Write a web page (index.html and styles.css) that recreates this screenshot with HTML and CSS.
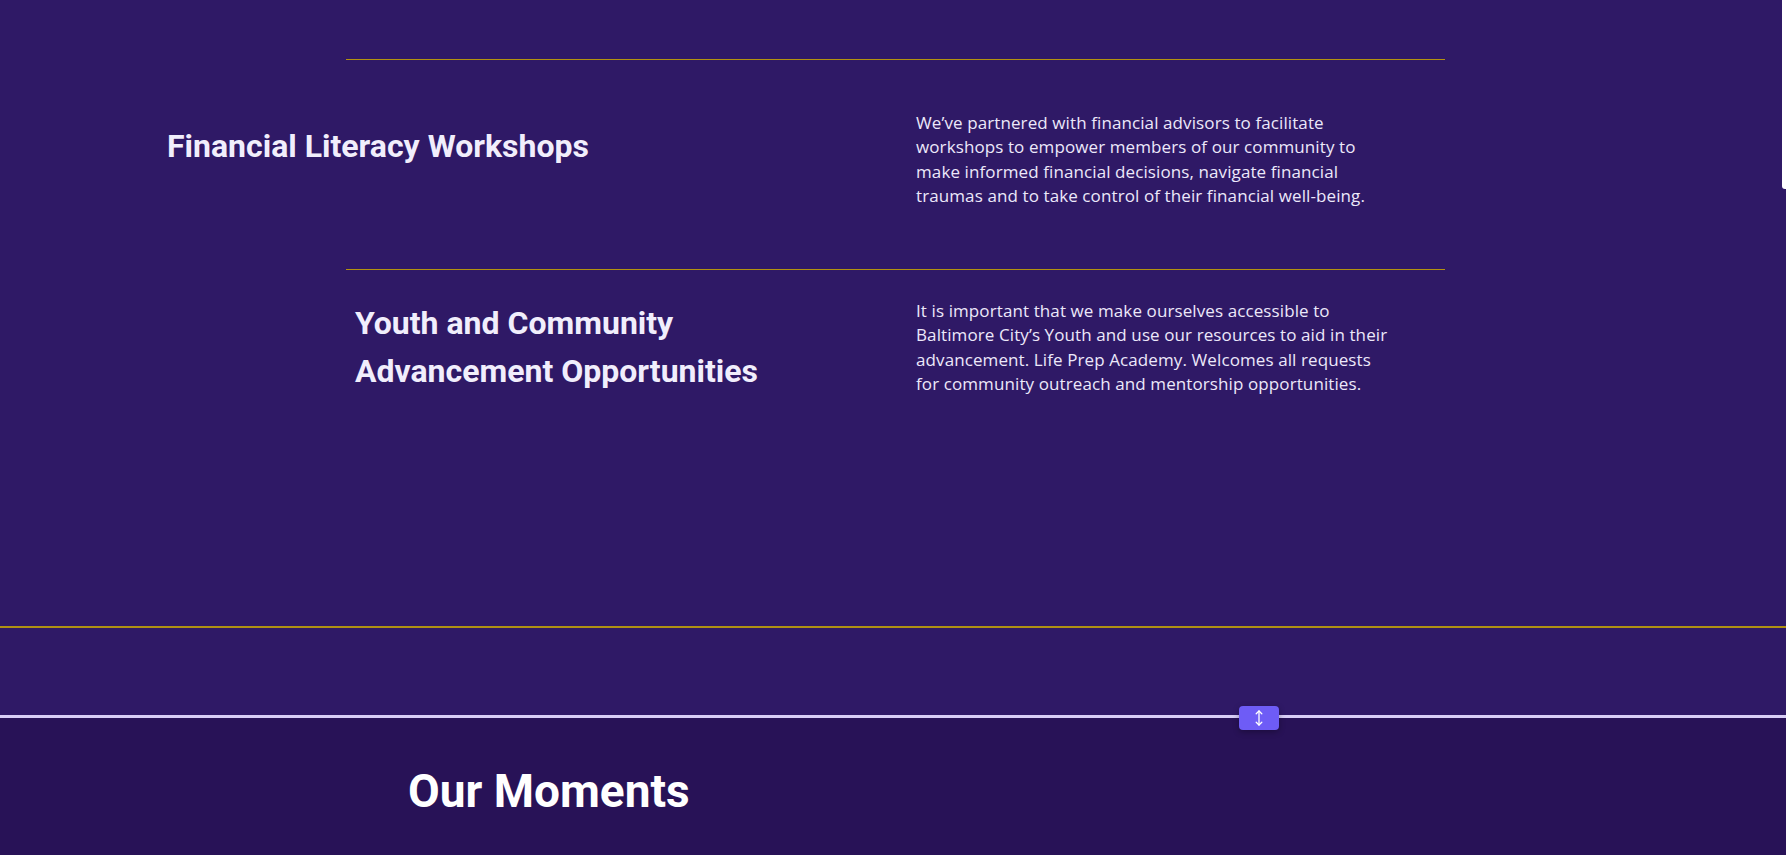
FILE: index.html
```html
<!DOCTYPE html>
<html lang="en">
<head>
<meta charset="utf-8">
<title>Services</title>
<link rel="stylesheet" href="styles.css">
</head>
<body>
<main class="page">
  <section class="services">
    <div class="services-inner">
      <div class="service service-first">
        <h2 class="service-title title-shifted">Financial Literacy Workshops</h2>
        <p class="service-text">We’ve partnered with financial advisors to facilitate workshops to empower members of our community to make informed financial decisions, navigate financial traumas and to take control of their financial well-being.</p>
      </div>
      <div class="service service-second">
        <h2 class="service-title">Youth and Community Advancement Opportunities</h2>
        <p class="service-text">It is important that we make ourselves accessible to Baltimore City’s Youth and use our resources to aid in their advancement. Life Prep Academy. Welcomes all requests for community outreach and mentorship opportunities.</p>
      </div>
    </div>
    <div class="gold-rule"></div>
  </section>
  <div class="divider">
    <button class="resize-handle" aria-label="Resize">
      <svg width="12" height="18" viewBox="0 0 12 18" fill="none" stroke="#ffffff" stroke-width="1.3" stroke-linecap="round" stroke-linejoin="round">
        <path d="M6 2v14"/>
        <path d="M3.2 4.8L6 2 8.8 4.8"/>
        <path d="M3.2 13.2L6 16 8.8 13.2"/>
      </svg>
    </button>
  </div>
  <section class="moments">
    <h2 class="moments-title">Our Moments</h2>
  </section>
  <div class="scroll-thumb"></div>
</main>
</body>
</html>
```
FILE: styles.css
```css
* { box-sizing: border-box; }
html, body { margin: 0; padding: 0; }
body {
  background: #281257;
  font-family: Roboto, "Liberation Sans", sans-serif;
  overflow: hidden;
}
.page {
  position: relative;
  width: 1786px;
  height: 855px;
  overflow: hidden;
}
.services {
  background: #2f1966;
  padding-top: 59px;
  height: 715px;
  display: flex;
  flex-direction: column;
}
.services-inner {
  width: 1099px;
  margin-left: 346px;
}
.service {
  display: flex;
  border-top: 1px solid #b3920f;
}
.service-first {
  padding-top: 51px;
  height: 210px;
}
.service-second {
  padding-top: 29px;
}
.service-title {
  margin: 0;
  width: 570px;
  flex: none;
  padding-left: 9px;
  padding-right: 90px;
  font-family: Roboto, sans-serif;
  font-weight: 700;
  font-size: 32px;
  line-height: 48px;
  color: #f1eefc;
}
.title-shifted {
  margin-left: -188px;
  margin-right: 188px;
  margin-top: 11px;
  padding-right: 0;
}
.service-text {
  margin: 0;
  max-width: 478px;
  font-family: "Open Sans", sans-serif;
  font-size: 17px;
  line-height: 24.3px;
  letter-spacing: 0.1px;
  color: #ece8fa;
}
.gold-rule {
  margin-top: auto;
  margin-bottom: 87px;
  height: 2px;
  background: #b09013;
}
.divider {
  position: relative;
  height: 3px;
  background: #d8cdf6;
}
.resize-handle {
  position: absolute;
  left: 1239px;
  top: -9px;
  width: 40px;
  height: 24px;
  border: none;
  border-radius: 4px;
  background: #6e5cf6;
  box-shadow: 0 2px 6px rgba(0,0,0,0.3);
  display: flex;
  align-items: center;
  justify-content: center;
  padding: 0;
}
.moments {
  background: #281257;
  padding-left: 408px;
  padding-top: 43px;
}
.moments-title {
  margin: 0;
  font-family: Roboto, sans-serif;
  font-weight: 700;
  font-size: 46px;
  line-height: 60px;
  color: #ffffff;
}
.scroll-thumb {
  position: absolute;
  right: 0;
  top: 0;
  width: 4px;
  height: 189px;
  background: #ffffff;
  border-bottom-left-radius: 3px;
}
```
